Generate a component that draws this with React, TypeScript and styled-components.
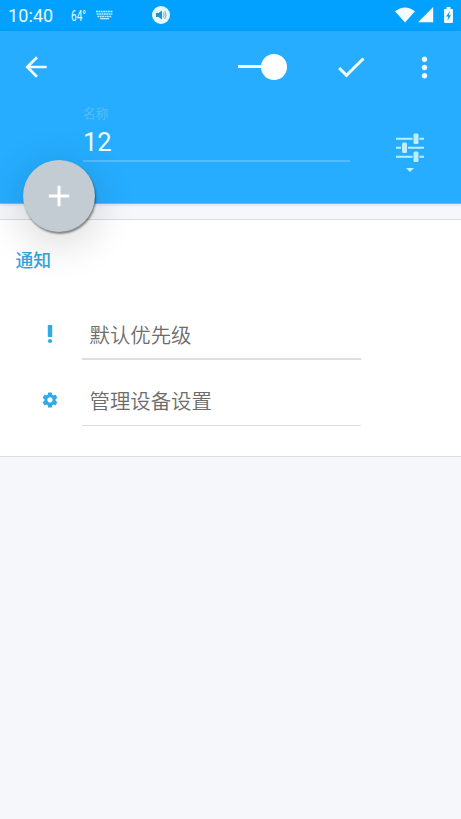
import React from 'react';
import styled, { createGlobalStyle } from 'styled-components';

const GlobalStyle = createGlobalStyle`
  * { box-sizing: border-box; }
  body {
    margin: 0;
    background: #f5f7fa;
    font-family: Roboto, "Noto Sans CJK SC", sans-serif;
  }
`;

const Screen = styled.div`
  width: 461px;
  height: 819px;
  overflow: hidden;
  background: #f5f7fa;
`;

const StatusBar = styled.header`
  display: flex;
  align-items: center;
  height: 31px;
  padding: 0 7.5px 1px 8px;
  background: #03a1ff;
  color: #e9faff;
`;

const Clock = styled.span`
  width: 63px;
  font-size: 18px;
  line-height: 30px;
  letter-spacing: 0.1px;
  padding-top: 1px;
`;

const Temperature = styled.span`
  width: 25px;
  padding-top: 1px;
  font-size: 14px;
  line-height: 30px;
  white-space: nowrap;
  transform: scaleX(0.72);
  transform-origin: left center;
`;

const StatusIcon = styled.svg<{ $gap?: number }>`
  display: block;
  flex: none;
  margin-left: ${({ $gap = 0 }) => $gap}px;
`;

const StatusEnd = styled.div`
  display: flex;
  align-items: center;
  margin-left: auto;
`;

const AppBar = styled.section`
  position: relative;
  height: 173px;
  background: #26adff;
  border-bottom: 1px solid #62bff6;
  box-shadow: 0 1px 3px rgba(0, 40, 70, 0.12);
`;

const Toolbar = styled.div`
  display: flex;
  align-items: center;
  height: 72px;
  padding-left: 20px;
`;

const IconButton = styled.button<{ $gap?: number }>`
  display: block;
  flex: none;
  margin: 0 0 0 ${({ $gap = 0 }) => $gap}px;
  padding: 0;
  border: 0;
  background: none;
  line-height: 0;
  svg { display: block; }
`;

const Switch = styled.div`
  display: flex;
  align-items: center;
  width: 49.5px;
  margin: 0 0 1px 185.5px;
`;

const Track = styled.span`
  flex: 1;
  height: 3px;
  background: #f2fcff;
`;

const Thumb = styled.span`
  width: 26px;
  height: 26px;
  border-radius: 50%;
  background: #fff;
`;

const NameRow = styled.div`
  display: flex;
  align-items: flex-start;
  padding-left: 83px;
`;

const Field = styled.label`
  display: flex;
  flex-direction: column;
  width: 267px;
  height: 59px;
  border-bottom: 2px solid #50beff;
`;

const FieldLabel = styled.span`
  height: 22px;
  font-size: 12.8px;
  line-height: 22px;
  color: #55bcfa;
`;

const FieldValue = styled.span`
  font-size: 25.5px;
  line-height: 34px;
  color: #f0fcff;
`;

const Fab = styled.button`
  position: absolute;
  left: 23px;
  top: 129px;
  z-index: 1;
  display: grid;
  place-items: center;
  width: 72px;
  height: 72px;
  padding: 0;
  border: 0;
  border-radius: 50%;
  background: #c3cbd3;
  box-shadow: 1px 2px 2px rgba(0, 0, 0, 0.44), 0 9px 38px 6px rgba(0, 0, 0, 0.13);
`;

const Card = styled.main`
  height: 238px;
  margin-top: 15px;
  border-top: 1px solid #d9dde2;
  border-bottom: 1px solid #d9dce0;
  background: #fff;
`;

const SectionTitle = styled.h2`
  margin: 0;
  padding: 28px 0 0 15.5px;
  height: 88px;
  font-size: 17.8px;
  line-height: 26px;
  font-weight: 500;
  color: #2fa6dc;
`;

const Settings = styled.div`
  display: grid;
  gap: 13px;
`;

const SettingRow = styled.div`
  display: flex;
  padding-left: 40px;
`;

const RowIcon = styled.span`
  display: grid;
  place-items: center;
  width: 20px;
  height: 52px;
  margin-right: 22px;
`;

const RowLabel = styled.span<{ $height: number; $line: number; $leading: number }>`
  width: 279px;
  height: ${({ $height }) => $height}px;
  padding-left: 7.5px;
  border-bottom: ${({ $line }) => $line}px solid #dcdfe0;
  font-size: 20.4px;
  font-weight: 350;
  line-height: ${({ $leading }) => $leading}px;
  color: #6c6c6c;
`;

const keyboardRows = [11, 13.5, 16];

export default function App() {
  return (
    <>
      <GlobalStyle />
      <Screen>
        <StatusBar>
          <Clock>10:40</Clock>
          <Temperature>64°</Temperature>
          <StatusIcon width="17" height="31" viewBox="0 0 17 31" stroke="#ccefff" fill="none">
            {keyboardRows.map((y, i) => (
              <path key={y} d={`M${i * 0.7} ${y + 0.5}H${17 - i * 0.7}`} strokeWidth="1.5" strokeDasharray="1.8 .6" />
            ))}
            <path d="M4 18.7H13" strokeWidth="1.2" />
          </StatusIcon>
          <StatusIcon $gap={39} width="18" height="18" viewBox="0 0 18 18">
            <circle cx="9" cy="9" r="9" fill="#e4f9ff" />
            <path d="M4 7H6.5L10 4.5V13.5L6.5 11H4Z" fill="#278fc4" />
            <path d="M11.3 6.5Q13 9 11.3 11.5M12.8 5Q15.4 9 12.8 13" stroke="#5db2da" fill="none" />
          </StatusIcon>
          <StatusEnd>
            <StatusIcon width="20" height="16" viewBox="0 0 20 16">
              <path d="M0 4.2Q10-3.4 20 4.2L10 15.5Z" fill="#f3fdff" />
            </StatusIcon>
            <StatusIcon $gap={3} width="16" height="16" viewBox="0 0 16 16">
              <path d="M15.2 0V15.3H0Z" fill="#f3fdff" />
            </StatusIcon>
            <StatusIcon $gap={9} width="11" height="18" viewBox="0 0 11 18">
              <path d="M3.5 1H7.5V3H9Q10 3 10 4V16Q10 17 9 17H2Q1 17 1 16V4Q1 3 2 3H3.5Z" fill="#effcff" />
              <path d="M7 5L3 10.5H5.2L4.5 14.8L8 9.2H5.8Z" fill="#159cf0" />
            </StatusIcon>
          </StatusEnd>
        </StatusBar>

        <AppBar>
          <Toolbar>
            <IconButton aria-label="返回">
              <svg width="32" height="32" viewBox="0 0 24 24" fill="#f2fcff">
                <path d="M20 11H7.83l5.59-5.59L12 4l-8 8 8 8 1.41-1.41L7.83 13H20v-2z" />
              </svg>
            </IconButton>
            <Switch>
              <Track />
              <Thumb />
            </Switch>
            <IconButton $gap={46} aria-label="确定">
              <svg width="36" height="36" viewBox="0 0 24 24" fill="#f2fcff">
                <path d="M9 16.17L4.83 12l-1.42 1.41L9 19 21 7l-1.41-1.41z" />
              </svg>
            </IconButton>
            <IconButton $gap={38.5} aria-label="更多">
              <svg width="33" height="33" viewBox="0 0 24 24" fill="#f2fcff">
                <path d="M12 8c1.1 0 2-.9 2-2s-.9-2-2-2-2 .9-2 2 .9 2 2 2zm0 2c-1.1 0-2 .9-2 2s.9 2 2 2 2-.9 2-2-.9-2-2-2zm0 6c-1.1 0-2 .9-2 2s.9 2 2 2 2-.9 2-2-.9-2-2-2z" />
              </svg>
            </IconButton>
          </Toolbar>
          <NameRow>
            <Field>
              <FieldLabel>名称</FieldLabel>
              <FieldValue>12</FieldValue>
            </Field>
            <IconButton $gap={46} aria-label="选项">
              <svg width="29" height="70" viewBox="0 0 29 70" fill="#bdeeff">
                <path d="M0 34.7H16.5V36.7H0ZM23.5 34.7H28V36.7H23.5ZM0 43.7H5V45.7H0ZM12 43.7H28V45.7H12ZM0 52.7H16.5V54.7H0ZM23.5 52.7H28V54.7H23.5Z" />
                <rect x="17.5" y="30.5" width="5" height="10.5" rx="1.5" />
                <rect x="6" y="39.5" width="5" height="10.5" rx="1.5" />
                <rect x="17.5" y="48.5" width="5" height="10.5" rx="1.5" />
                <path d="M10 65H18L14 69Z" />
              </svg>
            </IconButton>
          </NameRow>
          <Fab aria-label="添加">
            <svg width="22" height="22" viewBox="0 0 22 22">
              <path d="M11 .8V21.2M.8 11H21.2" stroke="#fff" strokeWidth="3" />
            </svg>
          </Fab>
        </AppBar>

        <Card>
          <SectionTitle>通知</SectionTitle>
          <Settings>
            <SettingRow>
              <RowIcon>
                <svg width="6" height="20" viewBox="0 0 6 20" fill="#2fa9e8">
                  <path d="M.8 1H5.2V13H.8Z" />
                  <circle cx="3" cy="17" r="2.1" />
                </svg>
              </RowIcon>
              <RowLabel $height={52} $line={2} $leading={56}>默认优先级</RowLabel>
            </SettingRow>
            <SettingRow>
              <RowIcon>
                <svg width="18" height="20" viewBox="0 -2.6 24 26.6" fill="#2fa9e8">
                  <path d="M19.43 12.98c.04-.32.07-.64.07-.98s-.03-.66-.07-.98l2.11-1.65c.19-.15.24-.42.12-.64l-2-3.46c-.12-.22-.39-.3-.61-.22l-2.49 1c-.52-.4-1.08-.73-1.69-.98l-.38-2.65C14.46 2.18 14.25 2 14 2h-4c-.25 0-.46.18-.49.42l-.38 2.65c-.61.25-1.17.59-1.69.98l-2.49-1c-.23-.09-.49 0-.61.22l-2 3.46c-.13.22-.07.49.12.64l2.11 1.65c-.04.32-.07.65-.07.98s.03.66.07.98l-2.11 1.65c-.19.15-.24.42-.12.64l2 3.46c.12.22.39.3.61.22l2.49-1c.52.4 1.08.73 1.69.98l.38 2.65c.03.24.24.42.49.42h4c.25 0 .46-.18.49-.42l.38-2.65c.61-.25 1.17-.59 1.69-.98l2.49 1c.23.09.49 0 .61-.22l2-3.46c.12-.22.07-.49-.12-.64l-2.11-1.65zM12 15.5c-1.93 0-3.5-1.57-3.5-3.5s1.57-3.5 3.5-3.5 3.5 1.57 3.5 3.5-1.57 3.5-3.5 3.5z" />
                </svg>
              </RowIcon>
              <RowLabel $height={53} $line={1} $leading={58}>管理设备设置</RowLabel>
            </SettingRow>
          </Settings>
        </Card>
      </Screen>
    </>
  );
}
